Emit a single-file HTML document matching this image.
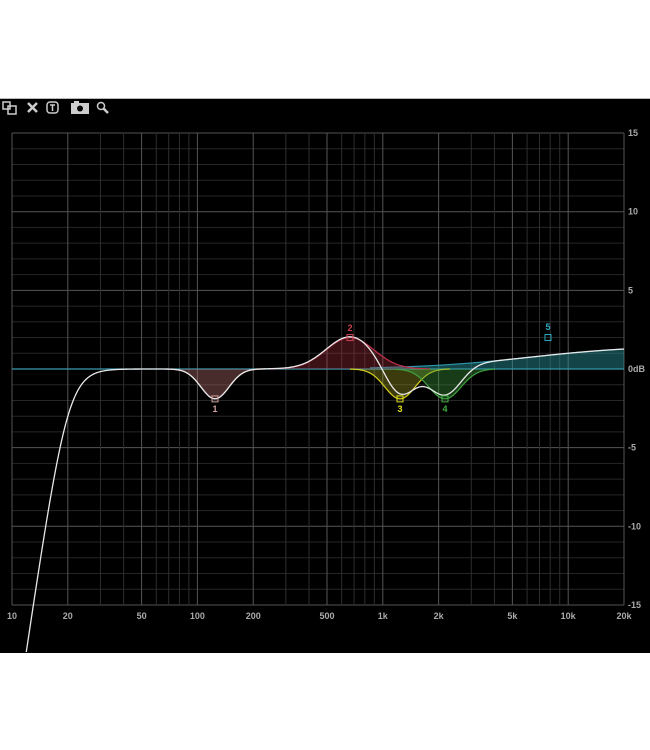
<!DOCTYPE html>
<html><head><meta charset="utf-8"><style>
html,body{margin:0;padding:0;background:#fff;width:650px;height:750px;overflow:hidden}
#p{position:absolute;left:0;top:98px;width:650px;height:554px;background:#000;border-top:1px solid #bbb}
svg{position:absolute;left:0;top:0}
text{font-family:"Liberation Sans",sans-serif;font-size:9px;font-weight:bold;fill:#aaa}
</style></head><body>
<div id="p"></div>
<svg id="s" width="650" height="750" xmlns="http://www.w3.org/2000/svg"></svg>
<script>
const s=document.getElementById('s');let h='';
const X0=12,PD=185.4,Y0=369,DB=15.73;
const fx=f=>X0+PD*(Math.log10(f)-1), dy=d=>Y0-d*DB;
h+='<defs><clipPath id="c"><rect x="0" y="99" width="650" height="553"/></clipPath></defs>';
for(let d=-15;d<=15;d++){const y=dy(d);const maj=d%5==0;
h+=`<line x1="${X0}" x2="624" y1="${y}" y2="${y}" stroke="${maj?'#555':'#262626'}" stroke-width="1"/>`;}
const majF=[10,20,50,100,200,500,1000,2000,5000,10000,20000];
for(let dec=10;dec<=10000;dec*=10)for(let m=1;m<=9;m++){const f=dec*m;if(f>20000)break;const x=fx(f);
const maj=majF.includes(f);h+=`<line x1="${x}" x2="${x}" y1="133" y2="605" stroke="${maj?'#555':'#2e2e2e'}"/>`;}
h+=`<line x1="624" x2="624" y1="133" y2="605" stroke="#555"/>`;
[[10,'10'],[20,'20'],[50,'50'],[100,'100'],[200,'200'],[500,'500'],[1000,'1k'],[2000,'2k'],[5000,'5k'],[10000,'10k'],[20000,'20k']].forEach(([f,t])=>{h+=`<text x="${fx(f)}" y="619" text-anchor="middle">${t}</text>`});
[[15,'15'],[10,'10'],[5,'5'],[0,'0dB'],[-5,'-5'],[-10,'-10'],[-15,'-15']].forEach(([d,t])=>{h+=`<text x="628" y="${dy(d)+3}">${t}</text>`});
const bell=(c,a,sg)=>x=>a*Math.exp(-((x-c)**2)/(2*sg*sg));
const b1=bell(215,-1.9,14),b2=bell(350,2.0,24),b3=bell(400,-1.9,15),b4=bell(445,-1.9,16);
const b5=x=>1.5/(1+Math.exp(-(x-530)/55))-1.5/(1+Math.exp(530/55));
const hp=x=>{const f=Math.pow(10,(x-X0)/PD+1);return 10*Math.log10(1/(1+Math.pow(20/f,8)));};
function path(fn,x1,x2){let d='';for(let x=x1;x<=x2;x+=1)d+=(d?'L':'M')+x+','+dy(fn(x)).toFixed(2);return d;}
function band(fn,x1,x2,stroke,fill){const d=path(fn,x1,x2);
h+=`<path d="${d}L${x2},${Y0}L${x1},${Y0}Z" fill="${fill}"/><path d="${d}" fill="none" stroke="${stroke}" stroke-width="1.2"/>`;}
h+=`<line x1="${X0}" x2="624" y1="${Y0}" y2="${Y0}" stroke="#3a9ab0" stroke-width="1.3"/>`;
band(b5,370,624,'#2a95a8','rgba(40,150,160,0.45)');
band(b2,270,430,'#c0304a','rgba(170,50,60,0.35)');
band(b1,165,265,'#c89090','rgba(180,110,110,0.4)');
band(b3,350,450,'#d8d020','rgba(170,170,40,0.35)');
band(b4,395,495,'#40a040','rgba(60,150,60,0.4)');
const tot=x=>b1(x)+b2(x)+b3(x)+b4(x)+b5(x)+hp(x);
h+=`<path clip-path="url(#c)" d="${path(tot,12,624)}" fill="none" stroke="#e8e8e8" stroke-width="1.3"/>`;
[[215,-1.9,'#d0a0a0','1',412],[350,2.0,'#d04050','2',331],[400,-1.9,'#e0e020','3',412],[445,-1.9,'#40b040','4',412],[548,2.0,'#30a8c0','5',330]].forEach(([x,d,c,t,ty])=>{
const y=dy(d);h+=`<rect x="${x-3}" y="${y-3}" width="6" height="6" fill="none" stroke="${c}"/><text x="${x}" y="${ty}" text-anchor="middle" style="fill:${c}">${t}</text>`;});
h+=`<g stroke="#ccc" fill="none" stroke-width="1.5">
<rect x="3" y="102" width="7" height="7"/><rect x="8" y="106" width="8" height="8"/>
<path d="M28 103L37 112M37 103L28 112" stroke-width="2.5"/>
<rect x="47" y="102" width="11" height="11" rx="3"/><path d="M50 105H55M52.5 105V111"/>
<circle cx="101" cy="106" r="3.5"/><path d="M103.5 108.5L108 113" stroke-width="2.5"/>
</g><rect x="71" y="103" width="18" height="11" fill="#ccc"/><rect x="74" y="101" width="5" height="3" fill="#ccc"/><circle cx="80" cy="108.5" r="3" fill="#000"/>`;
s.innerHTML=h;
</script>
</body></html>
